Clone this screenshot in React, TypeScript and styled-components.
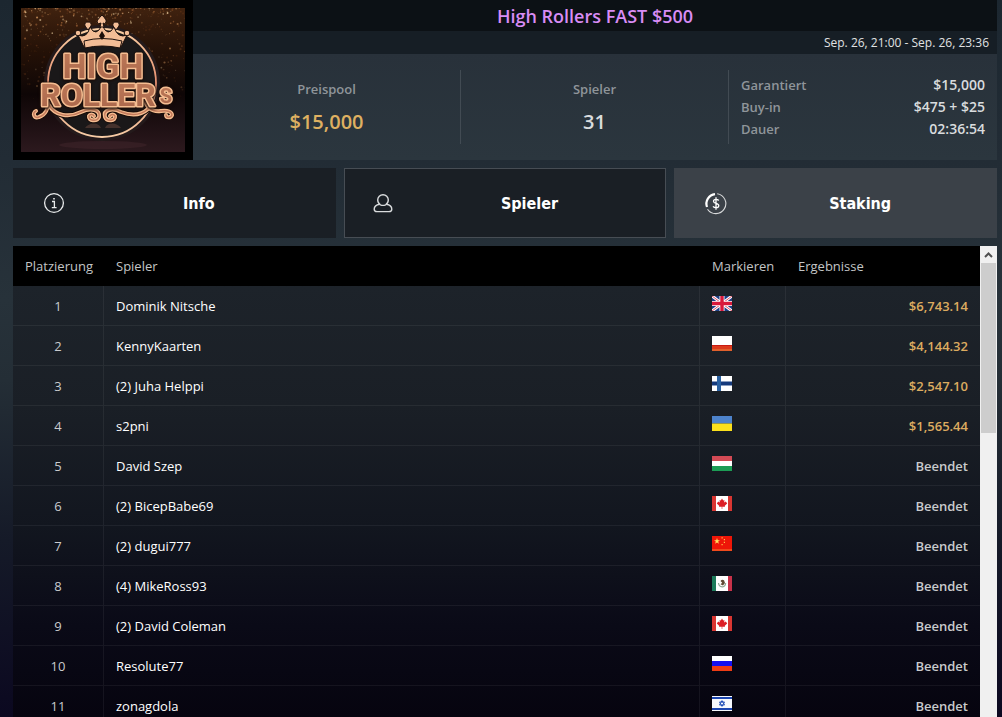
import React, { useRef } from "react";
import styled, { createGlobalStyle } from "styled-components";

const GlobalStyle = createGlobalStyle`
  *, *::before, *::after { box-sizing: border-box; }
  body {
    margin: 0;
    background: #07051a;
    font-family: "Open Sans", "Noto Sans", sans-serif;
    font-size: 13px;
    color: #d0d2d4;
  }
`;

const Page = styled.main`
  display: flex;
  flex-direction: column;
  gap: 8px;
  height: 100vh;
  padding: 0 5px 0 13px;
  overflow: hidden;
  background: linear-gradient(#1c2730 0, #222c35 160px, #27323a 300px, #242e36 380px, #151a28 540px, #0b0820 100%);
`;

const Header = styled.header`
  display: flex;
  flex: none;
  height: 160px;
`;

const LogoFrame = styled.div`
  flex: none;
  width: 180px;
  padding: 8px;
  background: #000;

  svg { display: block; width: 100%; height: 100%; }
`;

const Summary = styled.div`
  display: flex;
  flex: 1;
  flex-direction: column;
  min-width: 0;
`;

const Title = styled.h1`
  margin: 0;
  height: 31px;
  background: #0c1115;
  color: #d98cf5;
  font-size: 18px;
  font-weight: 600;
  line-height: 32px;
  text-align: center;
`;

const DateRange = styled.div`
  height: 23px;
  padding-right: 8px;
  background: #161e25;
  color: #e0e2e3;
  font-size: 12px;
  line-height: 23px;
  text-align: right;
`;

const Stats = styled.div`
  display: grid;
  flex: 1;
  grid-template-columns: repeat(3, 1fr);
  align-items: center;
  background: linear-gradient(#28313a, #2b363e);
`;

const Stat = styled.div`
  display: flex;
  flex-direction: column;
  align-items: center;
  gap: 10px;
  height: 74px;
  padding-top: 10px;
  border-right: 1px solid #424b53;
`;

const StatLabel = styled.span`
  color: #8f959a;
  font-weight: 600;
  line-height: 18px;
`;

const StatValue = styled.span<{ $gold?: boolean }>`
  color: ${(p) => (p.$gold ? "#deb061" : "#d9dcde")};
  font-size: 20px;
  font-weight: 600;
  line-height: 28px;
`;

const Details = styled.dl`
  margin: 0;
  height: 74px;
  padding: 4px 12px;
`;

const Detail = styled.div`
  display: flex;
  justify-content: space-between;
  line-height: 22px;
  font-weight: 600;

  dt { color: #8f959a; }
  dd { margin: 0; color: #d9dcde; font-size: 14px; }
`;

const Tabs = styled.nav`
  display: grid;
  flex: none;
  grid-template-columns: repeat(3, 1fr);
  gap: 8px;
`;

const Tab = styled.button<{ $look: "dark" | "active" | "light" }>`
  display: flex;
  align-items: center;
  height: 70px;
  padding: 0 3px 0 28px;
  border: 1px solid ${(p) => (p.$look === "active" ? "#474d54" : "transparent")};
  background: ${(p) => (p.$look === "light" ? "#3b4148" : "#1a1f25")};
  color: #fff;
  font-family: "DejaVu Sans Condensed", "DejaVu Sans", sans-serif;
  font-size: 16px;
  font-weight: 700;
  cursor: pointer;

  svg { flex: none; width: 24px; height: 24px; }
  span { flex: 1; text-align: center; }
`;

const Board = styled.section`
  display: flex;
  flex: 1;
  min-height: 0;
`;

const TableArea = styled.div`
  flex: 1;
  overflow-y: auto;
  scrollbar-width: none;
  background: linear-gradient(#1d232a 40px, #1a1f26 160px, #12161f 280px, #0a0a17 380px, #06040f 100%);
`;

const Table = styled.table`
  width: 100%;
  border-spacing: 0;
  table-layout: fixed;
`;

const HeadCell = styled.th`
  position: sticky;
  top: 0;
  height: 40px;
  padding: 0 12px;
  background: #000;
  color: #c3c5c6;
  font-weight: 400;
  text-align: left;
`;

const Cell = styled.td<{ $kind?: "rank" | "result" | "flag" }>`
  height: 40px;
  padding: 0 12px;
  border-bottom: 1px solid rgba(255, 255, 255, 0.06);
  border-right: ${(p) => (p.$kind === "result" ? "0" : "1px solid rgba(255, 255, 255, 0.06)")};
  color: ${(p) => (p.$kind === "rank" ? "#c9cbce" : "#fff")};
  text-align: ${(p) => (p.$kind === "rank" ? "center" : p.$kind === "result" ? "right" : "left")};

  svg { display: block; width: 20px; height: 15px; margin-bottom: 4px; }
`;

const Result = styled.span<{ $paid: boolean }>`
  color: ${(p) => (p.$paid ? "#dcab60" : "#c9cbcd")};
  font-weight: 600;
`;

const ScrollBar = styled.div`
  display: flex;
  flex: none;
  flex-direction: column;
  width: 17px;
  padding: 0 1px;
  background: #f0f0f0;
`;

const ScrollUp = styled.button`
  display: grid;
  place-items: center;
  height: 17px;
  padding: 0;
  border: 0;
  background: #f0f0f0;
`;

const Thumb = styled.div`
  height: 170px;
  background: #cdcdcd;
`;

/* ---------- artwork ---------- */

const makeSparkles = () => {
  let seed = 77;
  const rnd = () => {
    seed = (seed * 16807) % 2147483647;
    return seed / 2147483647;
  };
  const tones = ["#8a4c24", "#b87440", "#e0a468", "#5d3016", "#f6d9a8"];
  return Array.from({ length: 620 }, () => {
    const x = rnd() * 164;
    const y = Math.pow(rnd(), 2) * 92;
    return { x, y, r: 0.3 + rnd() * 0.8, fill: tones[Math.floor(rnd() * 5)], o: (0.2 + rnd() * 0.6) * (1 - y / 120) };
  });
};
const sparkles = makeSparkles();

const Lettering = styled.text`
  font-family: Roboto, "Liberation Sans", sans-serif;
  font-weight: 700;
  text-anchor: middle;
  fill: url(#copper);
  stroke: #f5bd91;
  stroke-width: 3px;
  stroke-linejoin: round;
  paint-order: stroke;
  filter: drop-shadow(0 0 1px #1a0d09) drop-shadow(0 1px 1px #1a0d09);
`;

const swirl =
  "M27 91C28 101 24 107 18 109C13 111 11 105 15 103M28 97C34 108 48 110 60 104C70 99 80 102 78 109C76 114 67 113 68 108C69 106 72 106 73 108";
const swirlRight =
  "M123 91C126 101 132 104 140 103C147 102 151 104 151 107C150 110 145 110 145 107M127 101C118 109 108 107 100 104C91 99 82 102 84 109C86 114 95 113 94 108C93 106 90 106 89 108";

const Logo = () => (
  <svg viewBox="0 0 164 144" preserveAspectRatio="xMidYMid slice" role="img" aria-label="High Rollers">
    <defs>
      <linearGradient id="night" x1="0" y1="0" x2="0" y2="1">
        <stop offset="0" stopColor="#40220f" />
        <stop offset="0.3" stopColor="#241107" />
        <stop offset="0.6" stopColor="#0e0606" />
        <stop offset="0.8" stopColor="#1d0f12" />
        <stop offset="1" stopColor="#2c191e" />
      </linearGradient>
      <linearGradient id="copper" x1="0" y1="0" x2="0" y2="1">
        <stop offset="0" stopColor="#c07c5a" />
        <stop offset="1" stopColor="#a8654a" />
      </linearGradient>
      <linearGradient id="ring" x1="0" y1="0" x2="0" y2="1">
        <stop offset="0" stopColor="#fbd0a4" />
        <stop offset="0.5" stopColor="#e58f70" />
        <stop offset="1" stopColor="#f7cda6" />
      </linearGradient>
    </defs>
    <rect width="164" height="144" fill="url(#night)" />
    {sparkles.map((s, i) => (
      <circle key={i} cx={s.x} cy={s.y} r={s.r} fill={s.fill} opacity={s.o} />
    ))}
    <ellipse cx="82" cy="137" rx="44" ry="4" fill="#42262b" opacity="0.5" />
    <circle cx="81" cy="75" r="58" fill="#241a1b" />
    <circle cx="81" cy="75" r="54" fill="#1a1819" stroke="url(#ring)" strokeWidth="1.8" />
    <path d="M64 120C68 114 78 114 80 120M84 120C86 114 96 114 100 120" fill="#604238" opacity="0.6" />
    <g fill="#f3bd96" stroke="#1b0e0a" strokeWidth="1">
      <path d="M63 39L57 27Q66 31 69 19Q75 30 81 17Q87 30 93 19Q97 31 106 27L100 39Q81 35 63 39Z" />
      <path d="M81 7Q86 12 85 14Q84 17 82 15L83 19H79L80 15Q77 17 76 14Q76 12 81 7Z" />
      <path d="M67 14Q71 14 70 18L67 22L64 18Q63 14 67 14ZM95 14Q99 14 98 18L95 22L92 18Q91 14 95 14Z" />
      <circle cx="57" cy="25" r="2.8" />
      <circle cx="106" cy="25" r="2.8" />
      <path d="M63 33Q81 28 101 33L99 40Q81 36 64 40Z" />
    </g>
    <path d="M81 23L84 28L81 32L78 28Z" fill="#1b0e0a" />
    <g fill="none" strokeLinecap="round">
      <path d={swirl} stroke="#1a0d09" strokeWidth="6" />
      <path d={swirlRight} stroke="#1a0d09" strokeWidth="6" />
      <path d={swirl} stroke="#f5bd91" strokeWidth="4" />
      <path d={swirlRight} stroke="#f5bd91" strokeWidth="4" />
      <path d={swirl} stroke="#c47b5c" strokeWidth="1.4" />
      <path d={swirlRight} stroke="#c47b5c" strokeWidth="1.4" />
    </g>
    <Lettering x="82" y="70" fontSize="34">HIGH</Lettering>
    <Lettering x="77" y="98" fontSize="32">ROLLER</Lettering>
    <Lettering x="145" y="95" fontSize="20">S</Lettering>
  </svg>
);

const InfoIcon = () => (
  <svg viewBox="0 -1 24 24" fill="none" stroke="#e8eaeb" strokeWidth="1.3" aria-hidden="true">
    <circle cx="12" cy="11" r="9.4" />
    <path d="M10 9.5h2.4v6M9.8 15.7h4.8" />
    <path d="M11.2 6.7h1.6" strokeWidth="1.6" />
  </svg>
);

const PlayerIcon = () => (
  <svg viewBox="2 -1 24 24" fill="none" stroke="#d9dbdd" strokeWidth="1.4" aria-hidden="true">
    <path d="M8.6 12.3C4.6 13 3.2 15 3.2 17.2C3.2 18.9 4.2 19.6 6 19.6H18C19.8 19.6 20.8 18.9 20.8 17.2C20.8 15 19.4 13 15.4 12.3" />
    <path d="M9.4 12.8C7.6 11.7 6.7 10 6.7 8.1A5.3 5.3 0 0 1 17.3 8.1C17.3 10 16.4 11.7 14.6 12.8Q12 14 9.4 12.8" />
  </svg>
);

const StakingIcon = () => (
  <svg viewBox="-1 -1 24 24" fill="none" stroke="#fff" aria-hidden="true">
    <path d="M13.2 1.7A10 10 0 1 1 3.5 17.2" strokeWidth="1.1" opacity="0.8" />
    <path d="M3 15A9.6 9.6 0 0 1 11 2.2" strokeWidth="2.2" />
    <path d="M14.7 8.5Q13.8 7.3 12 7.3Q9.5 7.4 9.5 9.2Q9.6 10.8 12 11.3Q14.8 12 14.8 13.7Q14.7 15.6 12 15.7Q10 15.7 9 14.3M12 5.3V17.7" strokeWidth="1.3" />
  </svg>
);

type Country = "gb" | "pl" | "fi" | "ua" | "hu" | "ca" | "cn" | "mx" | "ru" | "il";

const stripes = (...colors: string[]) =>
  colors.map((c, i) => (
    <rect key={i} y={(15 / colors.length) * i} width="20" height={15 / colors.length} fill={c} />
  ));

const flags: Record<Country, { name: string; art: React.ReactNode }> = {
  gb: {
    name: "Großbritannien",
    art: (
      <>
        <rect width="20" height="15" fill="#1d3f86" />
        <path d="M0 0L20 15M20 0L0 15" stroke="#fff" strokeWidth="3" />
        <path d="M0 0L20 15M20 0L0 15" stroke="#d8233f" strokeWidth="0.8" />
        <path d="M10 0V15M0 7.5H20" stroke="#fff" strokeWidth="5" />
        <path d="M10 0V15M0 7.5H20" stroke="#d8183a" strokeWidth="3.4" />
      </>
    ),
  },
  pl: {
    name: "Polen",
    art: (
      <>
        <rect width="20" height="9" fill="#fff" />
        <rect y="9" width="20" height="6" fill="#dc3a1c" />
        <rect y="9" width="20" height="1" fill="#c91a12" />
        <rect y="13" width="20" height="2" fill="#e0602c" />
      </>
    ),
  },
  fi: {
    name: "Finnland",
    art: (
      <>
        <rect width="20" height="15" fill="#fff" />
        <path d="M0 7.5H20" stroke="#153a7c" strokeWidth="4" />
        <path d="M7 0V15" stroke="#2960a0" strokeWidth="4" />
      </>
    ),
  },
  ua: { name: "Ukraine", art: stripes("#4d83cc", "#fbe01c") },
  hu: { name: "Ungarn", art: stripes("#d34a55", "#fff", "#1c9c55") },
  ca: {
    name: "Kanada",
    art: (
      <>
        <rect width="20" height="15" fill="#fff" />
        <path d="M0 0H4V15H0ZM16 0H20V15H16Z" fill="#d93632" />
        <path d="M10 2.4L11.2 4.6L12.4 4L12.2 6.6L13.8 5.6L15.2 7.4L12.8 9.8L13 10.8H7L7.2 9.8L4.8 7.4L6.2 5.6L7.8 6.6L7.6 4L8.8 4.6Z" fill="#dc1f26" />
        <path d="M10 10V13" stroke="#dc1f26" strokeWidth="0.6" />
      </>
    ),
  },
  cn: {
    name: "China",
    art: (
      <>
        <rect width="20" height="15" fill="#ee1608" />
        <rect y="13" width="20" height="2" fill="#f04a1c" />
        <path d="M5 2L5.8 4.2H8L6.2 5.5L6.9 7.7L5 6.4L3.1 7.7L3.8 5.5L2 4.2H4.2Z" fill="#ffe060" />
        <path d="M9.5 1.2h1.2v1.2h-1.2zM11.8 3h1.2v1.2h-1.2zM11.8 5.8h1.2v1.2h-1.2zM9.5 8h1.2v1.2h-1.2z" fill="#ffc04a" />
      </>
    ),
  },
  mx: {
    name: "Mexiko",
    art: (
      <>
        <rect width="20" height="15" fill="#fff" />
        <rect width="4" height="15" fill="#1c7a5a" />
        <rect x="16" width="4" height="15" fill="#c8324a" />
        <path d="M6.5 7Q7 11 10.5 10.8Q13.5 10.5 13.6 7" fill="none" stroke="#8fa693" strokeWidth="1.2" />
        <path d="M8.5 5Q10 3 12 4.3L13 7L11 9.4L8.5 8.2L10.2 6.7Z" fill="#604a34" />
      </>
    ),
  },
  ru: { name: "Russland", art: stripes("#fff", "#1410f0", "#ee3c14") },
  il: {
    name: "Israel",
    art: (
      <>
        <rect width="20" height="15" fill="#f6f8fd" />
        <path d="M0 2H20M0 13H20" stroke="#1b45b0" strokeWidth="1.8" />
        <path d="M10 4.6L12.5 9H7.5ZM10 10.4L7.5 6H12.5Z" fill="none" stroke="#2350b8" strokeWidth="1" />
      </>
    ),
  },
};

const Flag = ({ country }: { country: Country }) => (
  <svg viewBox="0 0 20 15" role="img" aria-label={flags[country].name}>{flags[country].art}</svg>
);

/* ---------- data ---------- */

const players: { name: string; country: Country; prize?: string }[] = [
  { name: "Dominik Nitsche", country: "gb", prize: "$6,743.14" },
  { name: "KennyKaarten", country: "pl", prize: "$4,144.32" },
  { name: "(2) Juha Helppi", country: "fi", prize: "$2,547.10" },
  { name: "s2pni", country: "ua", prize: "$1,565.44" },
  { name: "David Szep", country: "hu" },
  { name: "(2) BicepBabe69", country: "ca" },
  { name: "(2) dugui777", country: "cn" },
  { name: "(4) MikeRoss93", country: "mx" },
  { name: "(2) David Coleman", country: "ca" },
  { name: "Resolute77", country: "ru" },
  { name: "zonagdola", country: "il" },
];

const details = [
  ["Garantiert", "$15,000"],
  ["Buy-in", "$475 + $25"],
  ["Dauer", "02:36:54"],
];

export default function App() {
  const area = useRef<HTMLDivElement>(null);
  return (
    <>
      <GlobalStyle />
      <Page>
        <Header>
          <LogoFrame><Logo /></LogoFrame>
          <Summary>
            <Title>High Rollers FAST $500</Title>
            <DateRange>Sep. 26, 21:00 - Sep. 26, 23:36</DateRange>
            <Stats>
              <Stat>
                <StatLabel>Preispool</StatLabel>
                <StatValue $gold>$15,000</StatValue>
              </Stat>
              <Stat>
                <StatLabel>Spieler</StatLabel>
                <StatValue>31</StatValue>
              </Stat>
              <Details>
                {details.map(([label, value]) => (
                  <Detail key={label}><dt>{label}</dt><dd>{value}</dd></Detail>
                ))}
              </Details>
            </Stats>
          </Summary>
        </Header>
        <Tabs>
          <Tab type="button" $look="dark"><InfoIcon /><span>Info</span></Tab>
          <Tab type="button" $look="active" aria-current="page"><PlayerIcon /><span>Spieler</span></Tab>
          <Tab type="button" $look="light"><StakingIcon /><span>Staking</span></Tab>
        </Tabs>
        <Board>
          <TableArea ref={area}>
            <Table>
              <colgroup>
                <col width="91" />
                <col />
                <col width="86" />
                <col width="194" />
              </colgroup>
              <thead>
                <tr>
                  <HeadCell>Platzierung</HeadCell>
                  <HeadCell>Spieler</HeadCell>
                  <HeadCell>Markieren</HeadCell>
                  <HeadCell>Ergebnisse</HeadCell>
                </tr>
              </thead>
              <tbody>
                {players.map((p, i) => (
                  <tr key={p.name}>
                    <Cell $kind="rank">{i + 1}</Cell>
                    <Cell>{p.name}</Cell>
                    <Cell $kind="flag"><Flag country={p.country} /></Cell>
                    <Cell $kind="result"><Result $paid={!!p.prize}>{p.prize ?? "Beendet"}</Result></Cell>
                  </tr>
                ))}
              </tbody>
            </Table>
          </TableArea>
          <ScrollBar>
            <ScrollUp type="button" aria-label="Nach oben" onClick={() => area.current?.scrollBy(0, -40)}>
              <svg width="9" height="6" viewBox="0 0 9 6" fill="none" stroke="#505050" strokeWidth="2">
                <path d="M1 5L4.5 1.5L8 5" />
              </svg>
            </ScrollUp>
            <Thumb />
          </ScrollBar>
        </Board>
      </Page>
    </>
  );
}
